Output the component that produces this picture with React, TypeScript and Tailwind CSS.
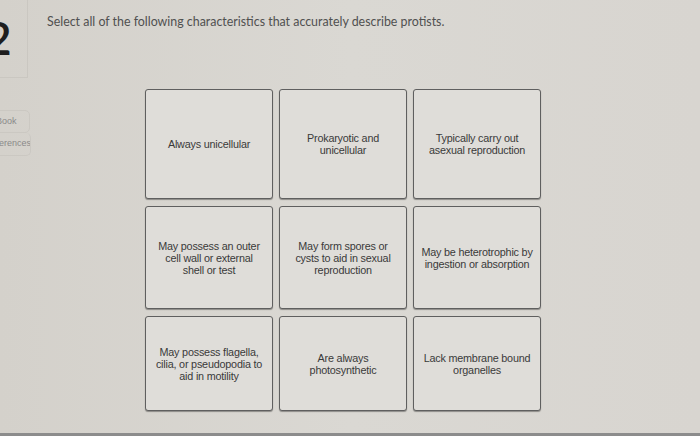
import React from "react";

const rows: { h: string; items: string[][] }[] = [
  {
    h: "h-[110px]",
    items: [
      ["Always unicellular"],
      ["Prokaryotic and", "unicellular"],
      ["Typically carry out", "asexual reproduction"],
    ],
  },
  {
    h: "h-[103px]",
    items: [
      ["May possess an outer", "cell wall or external", "shell or test"],
      ["May form spores or", "cysts to aid in sexual", "reproduction"],
      ["May be heterotrophic by", "ingestion or absorption"],
    ],
  },
  {
    h: "h-[95px]",
    items: [
      ["May possess flagella,", "cilia, or pseudopodia to", "aid in motility"],
      ["Are always", "photosynthetic"],
      ["Lack membrane bound", "organelles"],
    ],
  },
];

function Card({ lines, h }: { lines: string[]; h: string }) {
  return (
    <div
      className={`${h} w-[128px] flex items-center justify-center rounded-[3px] border-[1.5px] border-[#5f5f5f] bg-[#dfddd9] shadow-[0_1px_1px_rgba(0,0,0,0.35)]`}
    >
      <div className="text-center text-[10.8px] leading-[12px] text-[#3a3a3a] tracking-[-0.2px]">
        {lines.map((l, i) => (
          <div key={i}>{l}</div>
        ))}
      </div>
    </div>
  );
}

export default function App() {
  return (
    <div
      className="w-[700px] h-[436px] overflow-hidden flex flex-col bg-[#d7d4ce]"
      style={{ fontFamily: '"Liberation Sans", Arial, sans-serif' }}
    >
      <div className="h-[433px] flex bg-gradient-to-r from-[#d4d1cb] via-[#dad8d3] to-[#d8d5d0]">
        {/* left column */}
        <div className="w-[36px] flex flex-col shrink-0">
          <div className="h-[78px] w-[28px] border-r border-b border-[#cac7c1] overflow-hidden relative">
            <div
              className="absolute left-[-15px] top-[13px] text-[46px] leading-[50px] font-semibold text-[#1e1e1e]"
              style={{ fontFamily: 'Lato, "Liberation Sans", sans-serif' }}
            >
              2
            </div>
          </div>
          <div className="mt-[32px] flex flex-col">
            <div className="h-[23px] w-[36px] -ml-[6px] rounded-r-[5px] border border-[#cbc8c2] flex items-center text-[9px] text-[#8a8a8a] overflow-hidden whitespace-nowrap">
              <span className="-ml-[4px]">eBook</span>
            </div>
            <div className="h-[23px] w-[37px] -ml-[6px] rounded-r-[5px] border border-t-0 border-[#cbc8c2] flex items-center text-[9px] text-[#8a8a8a] overflow-hidden whitespace-nowrap">
              <span className="-ml-[10px]">References</span>
            </div>
          </div>
        </div>

        {/* main */}
        <div className="flex-1 pl-[11px] pt-[14px]">
          <div
            className="text-[12.4px] leading-[16px] text-[#505050]"
            style={{ fontFamily: 'Lato, "Liberation Sans", sans-serif' }}
          >
            Select all of the following characteristics that accurately describe protists.
          </div>
          <div className="mt-[59px] ml-[98px] flex flex-col gap-[7px]">
            {rows.map((r, ri) => (
              <div key={ri} className="flex gap-[6px]">
                {r.items.map((lines, ci) => (
                  <Card key={ci} lines={lines} h={r.h} />
                ))}
              </div>
            ))}
          </div>
        </div>
      </div>
      <div className="h-[3px] bg-[#8c8c8c]" />
    </div>
  );
}
